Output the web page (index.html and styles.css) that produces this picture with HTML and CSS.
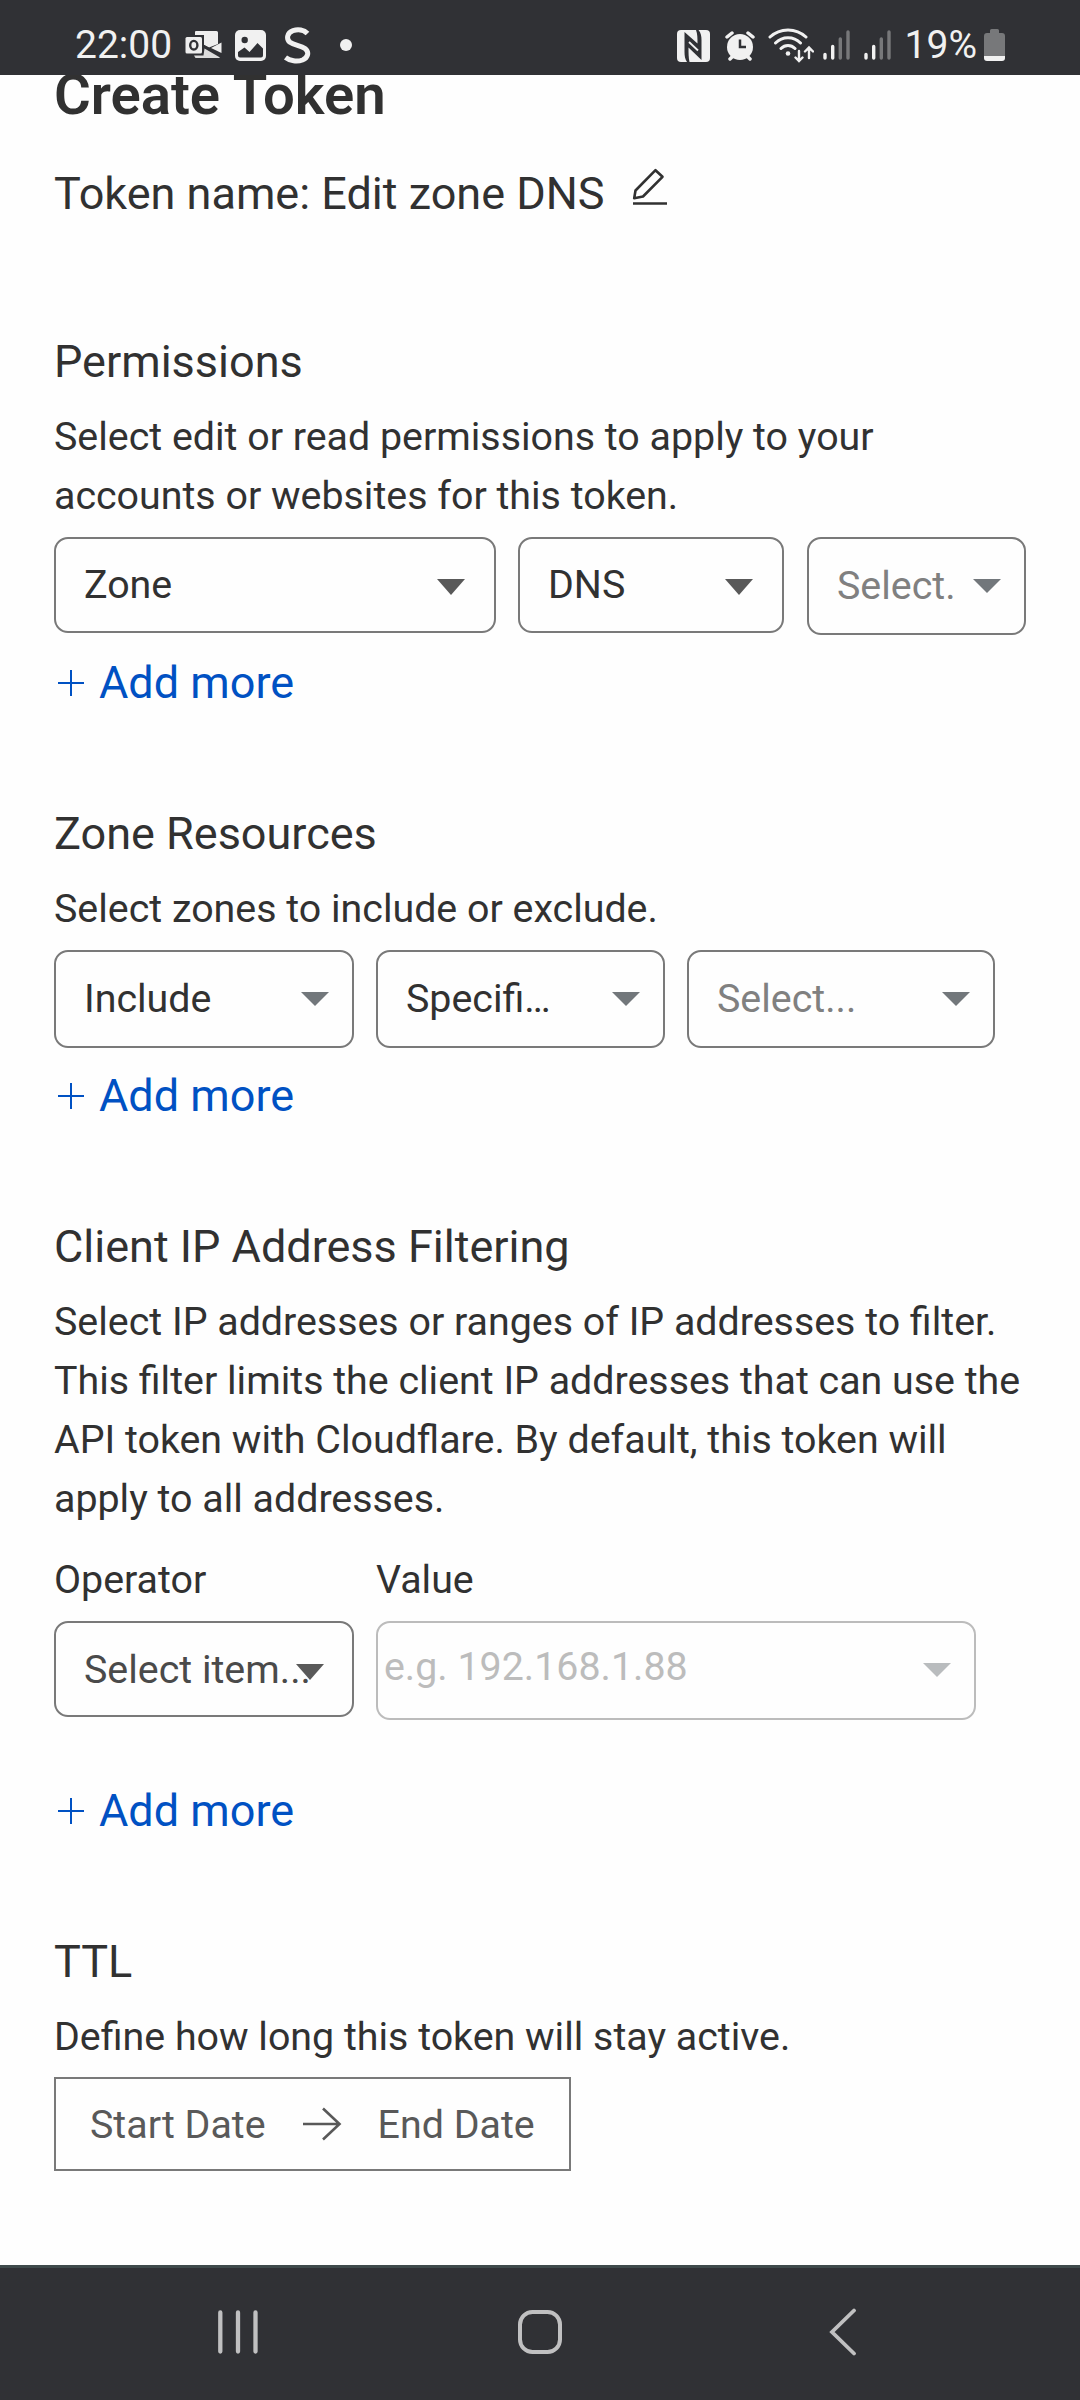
FILE: index.html
```html
<!DOCTYPE html>
<html lang="en">
<head>
<meta charset="utf-8">
<title>Create Token</title>
<link rel="stylesheet" href="styles.css">
</head>
<body>
<header class="status">
  <div class="status-left">
    <span class="clock">22:00</span>
    <svg class="ic-outlook" width="38" height="30" viewBox="0 0 38 30">
      <path d="M10 2a1 1 0 0 1 1-1h20.500a1.500 1.500 0 0 1 1.500 1.500V14l-9 3.500L19 15V5h-9z" fill="#eee"/>
      <path d="M36.500 12.500V23L26 18z" fill="#eee"/>
      <path d="M19.500 18.500L35 27.500a1.500 1.500 0 0 1-1 .500H10.500L9 25.500h9.500z" fill="#dcdcdc"/>
      <path d="M18.500 15.500L36.500 25.500" stroke="#303135" stroke-width="1.600"/>
      <rect x=".5" y="7" width="16.500" height="16.500" rx="1.500" fill="#eee"/>
      <ellipse cx="8.800" cy="15.200" rx="3.600" ry="4.300" fill="none" stroke="#303135" stroke-width="2.400"/>
    </svg>
    <svg class="ic-image" width="31" height="31" viewBox="0 0 31 31">
      <rect width="31" height="31" rx="5" fill="#f1f1f1"/>
      <circle cx="9.700" cy="10" r="3.200" fill="#303135"/>
      <path d="M3 22l6.500-4.500 5 4.500 8-9 5.500 5.500V25.500a2 2 0 0 1-2 2H5a2 2 0 0 1-2-2z" fill="#303135"/>
    </svg>
    <svg class="ic-s" width="28" height="37" viewBox="0 0 28 37">
      <path d="M24.500 6.500C21 2.800 15 2 10 3.600 4 5.700 3 12 7 15.300c4 2.900 11 3.200 15 6.200 4.500 3.500 3.200 9-2.500 11.500C14 35 7 34 2.500 30.500" fill="none" stroke="#f1f1f1" stroke-width="5"/>
    </svg>
    <span class="dot"></span>
  </div>
  <div class="status-right">
    <svg class="ic-nfc" width="33" height="32" viewBox="0 0 33 32">
      <rect width="33" height="32" rx="4" fill="#f1f1f1"/>
      <path d="M7.500 2L20.500 13.500C20.500 8 20.500 4 19 0h2.500c2.500 3 3 6 3 10v20L11.500 17.500c0 6 0 10 1 14.500H10c-2-3-2.500-6-2.500-10z" fill="#303135"/>
      <path d="M12 12l9 8.500" stroke="#f1f1f1" stroke-width="1.800"/>
    </svg>
    <svg class="ic-alarm" width="30" height="30" viewBox="0 0 30 30">
      <circle cx="15" cy="16" r="13" fill="#f1f1f1"/>
      <path d="M2 6l5-4M28 6l-5-4M5 28l3-3M25 28l-3-3" stroke="#f1f1f1" stroke-width="3.500" stroke-linecap="round"/>
      <path d="M15 8.500V16h6" fill="none" stroke="#303135" stroke-width="2.500"/>
    </svg>
    <svg class="ic-wifi" width="46" height="36" viewBox="0 0 46 36">
      <g fill="none" stroke="#f1f1f1" stroke-width="3" stroke-linecap="round">
        <path d="M2 10C12 .500 28 .500 38 10M7.500 16c7-7 18-7 25 0M13 21.500c4-4 10-4 14 0"/>
        <path d="M31 24v9M27.500 30.500l3.500 3.500 3.500-3.500M41 31v-9.500M37 24.500l4-4 4 4" stroke-width="2.400"/>
      </g>
      <circle cx="20" cy="26.500" r="2.300" fill="#f1f1f1"/>
    </svg>
    <svg class="ic-signal" width="28" height="30" viewBox="0 0 28 30">
      <path d="M2 24.500v3.500M9.700 16.500V28" stroke="#f1f1f1" stroke-width="3.400" stroke-linecap="round"/>
      <path d="M17.300 9v19M25 2v26" stroke="#77787a" stroke-width="3.400" stroke-linecap="round"/>
    </svg>
    <svg class="ic-signal2" width="28" height="30" viewBox="0 0 28 30">
      <path d="M2 24.500v3.500M9.700 16.500V28" stroke="#f1f1f1" stroke-width="3.400" stroke-linecap="round"/>
      <path d="M17.300 9v19M25 2v26" stroke="#77787a" stroke-width="3.400" stroke-linecap="round"/>
    </svg>
    <span class="percent">19%</span>
    <svg class="ic-battery" width="21" height="32" viewBox="0 0 21 32">
      <path d="M6 4V1.500A1.500 1.500 0 0 1 7.500 0h6A1.500 1.500 0 0 1 15 1.500V4h3a3 3 0 0 1 3 3v20H0V7a3 3 0 0 1 3-3z" fill="#77787a"/>
      <path d="M0 27h21v2a3 3 0 0 1-3 3H3a3 3 0 0 1-3-3z" fill="#f1f1f1"/>
    </svg>
  </div>
</header>

<main class="page">
  <h1 class="title">Create Token</h1>
  <div class="token-name">
    <span>Token name: Edit zone DNS</span>
    <svg class="pencil" width="36" height="38" viewBox="0 0 36 38">
      <path d="M3.500 22.500L23.500 2.200 30.500 8.800 11 28.500 2.200 30.200z" fill="none" stroke="#313131" stroke-width="2.600" stroke-linejoin="round"/>
      <path d="M1 35.500h34" stroke="#313131" stroke-width="2.600"/>
    </svg>
  </div>

  <section class="section permissions">
    <h2 class="heading">Permissions</h2>
    <p class="text">Select edit or read permissions to apply to your accounts or websites for this token.</p>
    <div class="row">
      <div class="select w-442"><span class="label">Zone</span><i class="arrow dark"></i></div>
      <div class="select w-266"><span class="label">DNS</span><i class="arrow dark"></i></div>
      <div class="select tall w-219"><span class="label muted">Select.</span><i class="arrow"></i></div>
    </div>
    <a class="add"><svg class="plus" width="28" height="28" viewBox="0 0 28 28"><path d="M14 1v26M1 14h26"/></svg>Add more</a>
  </section>

  <section class="section">
    <h2 class="heading">Zone Resources</h2>
    <p class="text">Select zones to include or exclude.</p>
    <div class="row">
      <div class="select tall w-300"><span class="label">Include</span><i class="arrow"></i></div>
      <div class="select tall w-289"><span class="label">Specifi…</span><i class="arrow"></i></div>
      <div class="select tall w-308"><span class="label muted">Select...</span><i class="arrow"></i></div>
    </div>
    <a class="add"><svg class="plus" width="28" height="28" viewBox="0 0 28 28"><path d="M14 1v26M1 14h26"/></svg>Add more</a>
  </section>

  <section class="section">
    <h2 class="heading">Client IP Address Filtering</h2>
    <p class="text">Select IP addresses or ranges of IP addresses to filter. This filter limits the client IP addresses that can use the API token with Cloudflare. By default, this token will apply to all addresses.</p>
    <div class="fields">
      <div class="field">
        <span class="field-label">Operator</span>
        <div class="select w-300 operator"><span class="label soft">Select item...</span><i class="arrow dark"></i></div>
      </div>
      <div class="field">
        <span class="field-label">Value</span>
        <div class="select w-600 value"><span class="label">e.g. 192.168.1.88</span><i class="arrow"></i></div>
      </div>
    </div>
    <a class="add spaced"><svg class="plus" width="28" height="28" viewBox="0 0 28 28"><path d="M14 1v26M1 14h26"/></svg>Add more</a>
  </section>

  <section class="section">
    <h2 class="heading">TTL</h2>
    <p class="text">Define how long this token will stay active.</p>
    <div class="dates">
      <span class="start">Start Date</span>
      <svg class="to" width="40" height="34" viewBox="0 0 40 34"><path d="M1 17h36M21 1.500L37.500 17 21 32.500" fill="none" stroke="#595959" stroke-width="2.600"/></svg>
      <span>End Date</span>
    </div>
  </section>
</main>

<nav class="nav">
  <svg width="42" height="46" viewBox="0 0 42 46"><path d="M3.300 3.500v39M21 3.500v39M38.500 3.500v39" stroke="#c0c0c1" stroke-width="4.300" stroke-linecap="round"/></svg>
  <svg class="nav-home" width="46" height="46" viewBox="0 0 46 46"><rect x="2" y="3" width="40" height="40" rx="12.500" fill="none" stroke="#c0c0c1" stroke-width="4"/></svg>
  <svg class="nav-back" width="28" height="48" viewBox="0 0 28 48"><path d="M25 2.500L3 24l22 21.500" fill="none" stroke="#c0c0c1" stroke-width="3.800" stroke-linecap="round"/></svg>
</nav>
</body>
</html>
```
FILE: styles.css
```css
* {
  box-sizing: border-box;
}

body {
  margin: 0;
  width: 1080px;
  height: 2400px;
  display: flex;
  flex-direction: column;
  overflow: hidden;
  background: #fefefe;
  color: #313131;
  font-family: Roboto, sans-serif;
  font-size: 39.375px;
  line-height: 59px;
}

svg {
  display: block;
  flex: none;
}

/* status bar */
.status {
  flex: none;
  height: 75px;
  padding: 15px 75px 0 75px;
  display: flex;
  justify-content: space-between;
  background: #303135;
  color: #f1f1f1;
  position: relative;
  z-index: 1;
}

.status-left,
.status-right {
  display: flex;
  align-items: center;
  height: 60px;
}

.clock,
.percent {
  font-size: 39px;
  line-height: 60px;
}

.clock {
  width: 110px;
}

.ic-image { margin: 1px 0 0 12px; }
.ic-s { margin-left: 17px; }

.dot {
  width: 12px;
  height: 12px;
  margin-left: 29px;
  border-radius: 50%;
  background: #f1f1f1;
}

.ic-nfc { margin-top: 2px; }
.ic-alarm { margin: 2px 0 0 15px; }
.ic-wifi { margin-left: 13px; }
.ic-signal { margin-left: 9px; }
.ic-signal2 { margin-left: 13px; }
.percent { margin-left: 13px; }
.ic-battery { margin-left: 7px; }

/* page content */
.page {
  flex: 1;
  min-height: 0;
  padding: 0 54px;
}

.title {
  margin: -15px 0 0;
  height: 70px;
  font-size: 56.25px;
  line-height: 70px;
  font-weight: 600;
}

.token-name {
  display: flex;
  margin-top: 30px;
  height: 68px;
  font-size: 45px;
  line-height: 68px;
}

.pencil {
  margin-left: 27px;
  margin-top: 8px;
}

.section {
  margin-top: 83px;
}

.permissions {
  margin-top: 100px;
}

.heading {
  margin: 0;
  font-size: 45px;
  line-height: 68px;
  font-weight: 400;
}

.text {
  margin: 11px 0 0;
}

.row,
.fields {
  display: flex;
  align-items: flex-start;
  gap: 22px;
}

.row {
  margin-top: 12px;
  height: 98px;
}

.select {
  display: flex;
  align-items: center;
  justify-content: space-between;
  height: 96px;
  padding: 0 29px 2px 28px;
  border: 2px solid #797979;
  border-radius: 14px;
}

.tall {
  height: 98px;
  padding: 0 23px 2px 28px;
}

.label {
  white-space: nowrap;
}

.muted { color: #808080; }
.soft { color: #4a4a4a; }

.arrow {
  flex: none;
  margin-top: 2px;
  border: 14px solid transparent;
  border-top-color: #72777b;
  border-bottom-width: 0;
}

.dark {
  margin-top: 6px;
  border-width: 16px 14px 0;
  border-top-color: #595959;
}

.w-442 { width: 442px; }
.w-266 { width: 266px; }
.w-219 { width: 219px; margin-left: 1px; }
.w-300 { width: 300px; }
.w-289 { width: 289px; }
.w-308 { width: 308px; }
.w-600 { width: 600px; }

.add {
  display: flex;
  align-items: center;
  margin-top: 14px;
  height: 68px;
  color: #0051c3;
  font-size: 45px;
  line-height: 68px;
}

.plus {
  margin: 0 14px 0 3px;
  fill: none;
  stroke: #0051c3;
  stroke-width: 2;
}

.fields {
  margin-top: 22px;
}

.field-label {
  display: block;
  margin-bottom: 12px;
}

.operator {
  padding: 0 28px 0 28px;
}

.operator .label {
  width: 240px;
}

.operator .arrow {
  margin-left: -28px;
}

.value {
  height: 99px;
  padding: 0 23px 9px 6px;
  border-color: #bcbcbc;
  color: #bcbcbc;
}

.value .arrow {
  margin-top: 8px;
  border-top-color: #b9bcbe;
}

.spaced {
  margin-top: 57px;
}

.dates {
  display: flex;
  align-items: center;
  width: 517px;
  height: 94px;
  margin-top: 11px;
  padding: 0 0 0 34px;
  border: 2px solid #797979;
  color: #595959;
}

.to {
  margin: 0 36px;
}

/* navigation bar */
.nav {
  flex: none;
  height: 135px;
  padding: 0 0 4px 217px;
  display: flex;
  align-items: center;
  background: #303135;
  border-top: 3px solid #3f4a4b;
}

.nav-home { margin-left: 259px; }
.nav-back { margin-left: 265px; }
```
